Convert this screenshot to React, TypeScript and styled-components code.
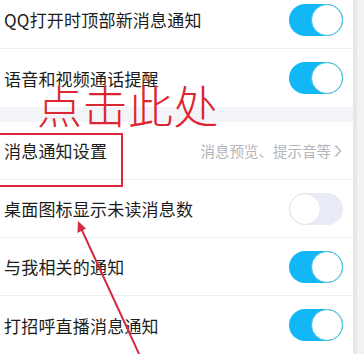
import React from 'react'
import styled, { createGlobalStyle } from 'styled-components'

interface Setting {
  label: string
  on?: boolean
  detail?: string
}

const topGroup: Setting[] = [
  { label: 'QQ打开时顶部新消息通知', on: true },
  { label: '语音和视频通话提醒', on: true }
]

const bottomGroup: Setting[] = [
  { label: '消息通知设置', detail: '消息预览、提示音等' },
  { label: '桌面图标显示未读消息数', on: false },
  { label: '与我相关的通知', on: true },
  { label: '打招呼直播消息通知', on: true }
]

const Row: React.FC<Setting> = ({ label, on, detail }) => (
  <RowBox>
    <Label>{label}</Label>
    {detail !== undefined ? (
      <Detail>
        {detail}
        <Chevron viewBox="0 0 8 14">
          <path d="M1.5 1.5 L6.5 7 L1.5 12.5" />
        </Chevron>
      </Detail>
    ) : (
      <Switch $on={!!on}>
        <Knob $on={!!on} />
      </Switch>
    )}
  </RowBox>
)

const App: React.FC = () => {
  return (
    <>
      <GlobalStyle />
      <Screen>
        <Content>
          <List>
            {topGroup.map(s => (
              <Row key={s.label} {...s} />
            ))}
          </List>
          <SectionGap />
          <List>
            {bottomGroup.map(s => (
              <Row key={s.label} {...s} />
            ))}
          </List>
        </Content>
        <Gutter />

        <Callout>点击此处</Callout>
        <Highlight />
        <Arrow viewBox="0 0 364 354">
          <line x1="140" y1="356" x2="80" y2="226" />
          <polygon points="78,221 77.5,233 86,228.5" />
        </Arrow>
      </Screen>
    </>
  )
}

export default App

const GlobalStyle = createGlobalStyle`
  html, body {
    margin: 0;
    padding: 0;
    background: #ffffff;
  }
  body {
    font-family: "Noto Sans CJK SC", "Noto Sans", sans-serif;
  }
`

const Screen = styled.div`
  position: relative;
  width: 364px;
  height: 354px;
  overflow: hidden;
  display: flex;
  background: #ffffff;
`

const Content = styled.div`
  width: 353px;
  display: flex;
  flex-direction: column;
  margin-top: -9px;
`

const Gutter = styled.div`
  flex: 1;
  border-left: 4px solid #e7e7e7;
  background: #f2f2f2;
`

const List = styled.div`
  display: flex;
  flex-direction: column;
  background: #ffffff;
`

const SectionGap = styled.div`
  height: 20px;
  background: #f3f4f8;
`

const RowBox = styled.div`
  height: 58px;
  box-sizing: border-box;
  display: flex;
  align-items: center;
  justify-content: space-between;
  padding: 0 10px 0 4px;
  border-bottom: 1px solid #efefef;

  &:last-child {
    border-bottom: none;
  }
`

const Label = styled.span`
  font-size: 17px;
  color: #1c1c1c;
  letter-spacing: 0.2px;
`

const Detail = styled.span`
  display: flex;
  align-items: center;
  gap: 3px;
  font-size: 14.5px;
  color: #b3b5bb;
  padding-right: 1px;
`

const Chevron = styled.svg`
  width: 8px;
  height: 14px;
  fill: none;
  stroke: #b3b5bb;
  stroke-width: 1.4;
`

const Switch = styled.div<{ $on: boolean }>`
  width: 54px;
  height: 32px;
  border-radius: 16px;
  background: ${({ $on }) => ($on ? '#12b7f5' : '#e9ebf6')};
  display: flex;
  align-items: center;
  justify-content: ${({ $on }) => ($on ? 'flex-end' : 'flex-start')};
`

const Knob = styled.div<{ $on: boolean }>`
  width: 32px;
  height: 32px;
  box-sizing: border-box;
  border-radius: 50%;
  background: #ffffff;
  border: 1.5px solid ${({ $on }) => ($on ? '#4cc0d8' : '#e2e3e8')};
`

const Callout = styled.div`
  position: absolute;
  left: 37px;
  top: 79px;
  font-size: 45px;
  line-height: 52px;
  font-weight: 300;
  color: #dc2530;
  letter-spacing: 0.5px;
`

const Highlight = styled.div`
  position: absolute;
  left: -3px;
  top: 133px;
  width: 122px;
  height: 50px;
  border: 2px solid #d8283a;
`

const Arrow = styled.svg`
  position: absolute;
  left: 0;
  top: 0;
  width: 364px;
  height: 354px;
  pointer-events: none;

  line {
    stroke: #d42a3e;
    stroke-width: 2;
  }
  polygon {
    fill: #d42a3e;
  }
`
